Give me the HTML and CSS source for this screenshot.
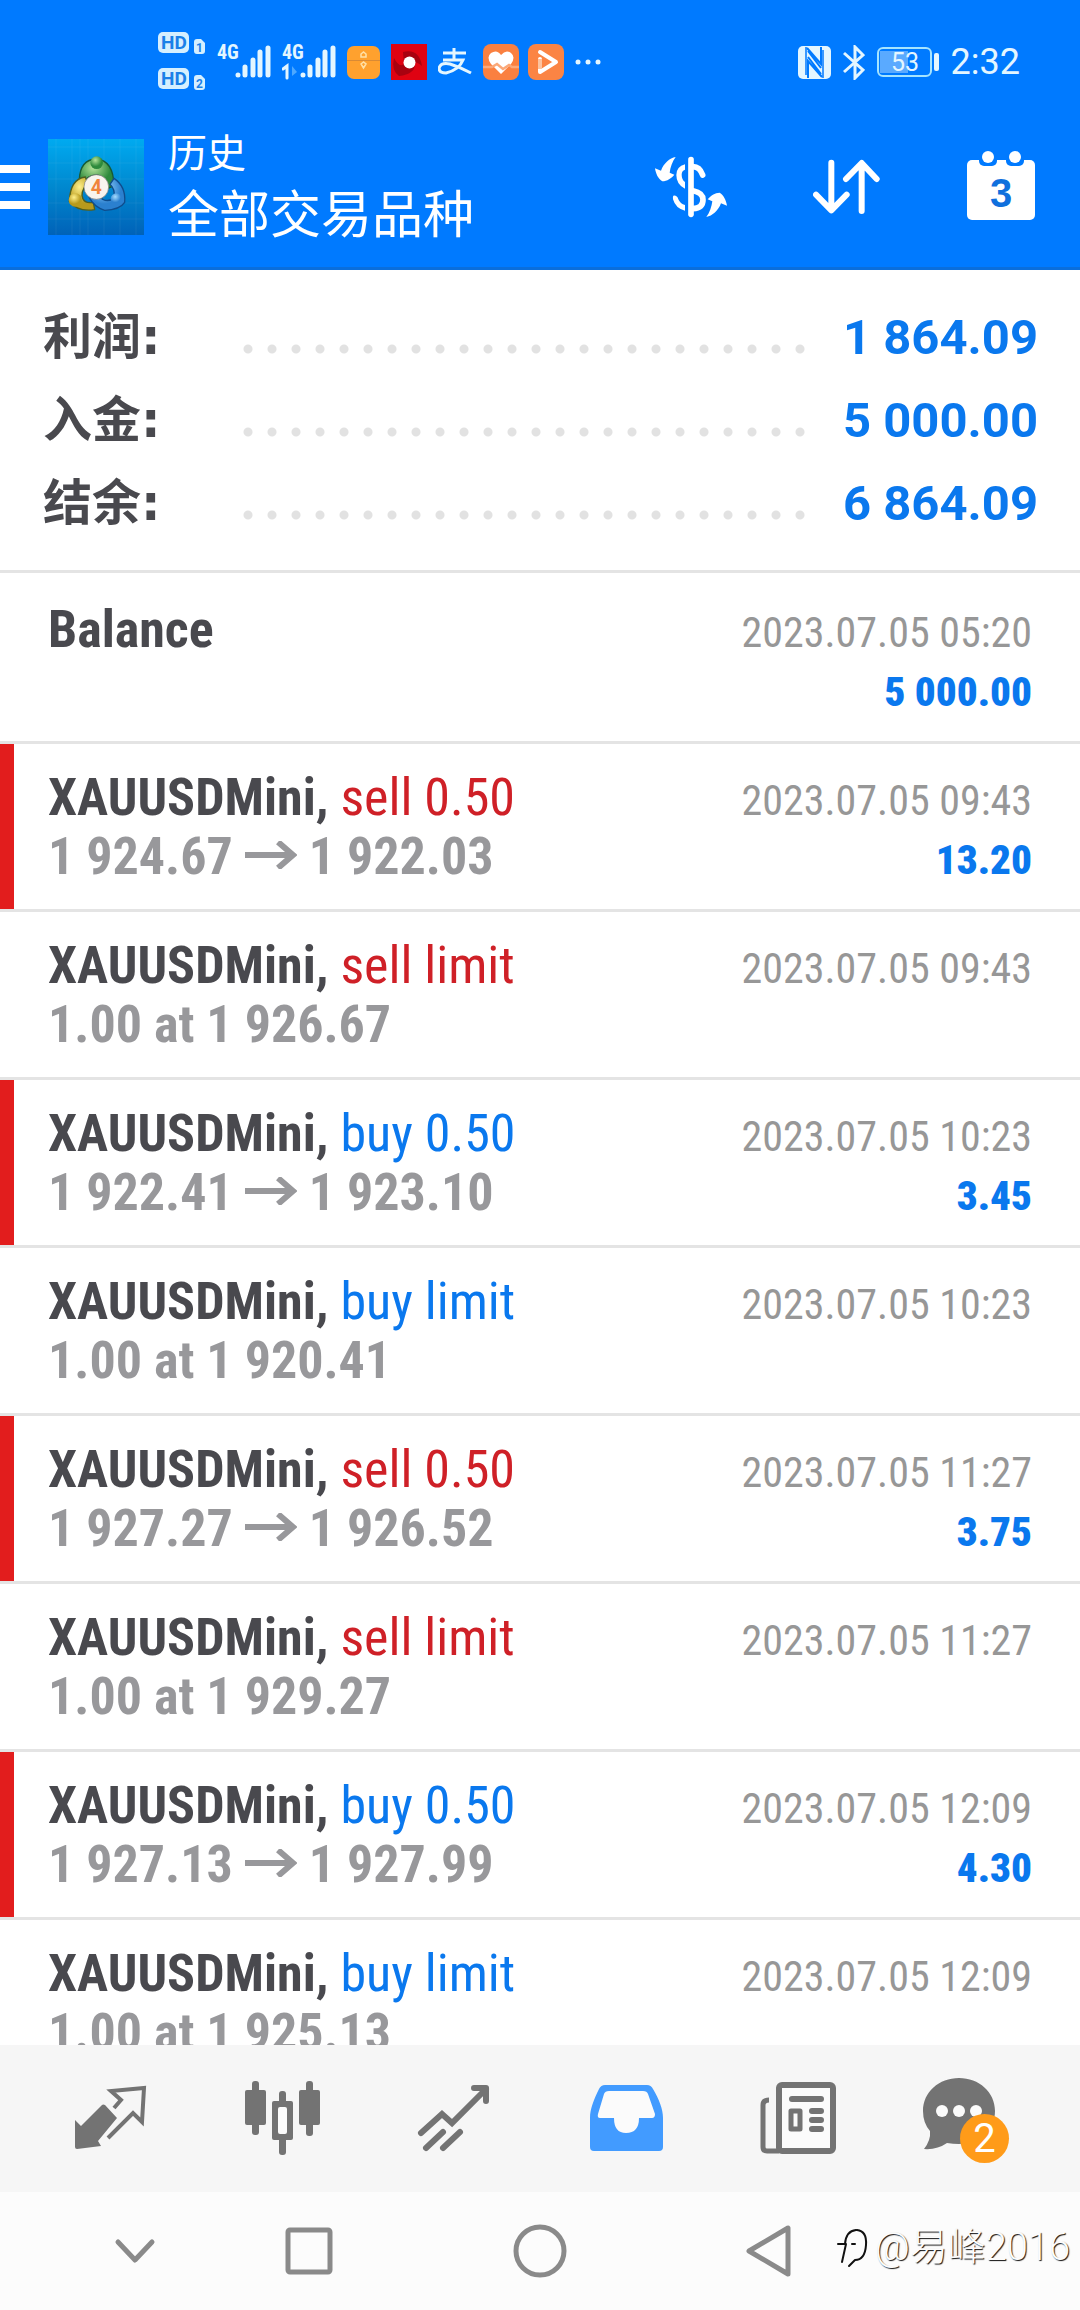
FILE: index.html
```html
<!DOCTYPE html>
<html lang="zh-CN">
<head>
<meta charset="utf-8">
<meta name="viewport" content="width=device-width, initial-scale=1">
<title>历史</title>
<link rel="stylesheet" href="styles.css">
</head>
<body>
<div class="screen">
  <div class="status">
    <div class="status-left">
      <svg class="hd" width="48" height="60" viewBox="0 0 48 60">
        <rect x="0" y="0" width="31" height="21" rx="5"/><rect x="0" y="36" width="31" height="21" rx="5"/>
        <path d="M36 10 q0-3 3-3 h4 l4 4 v8 q0 3-3 3 h-5 q-3 0-3-3z M36 46 q0-3 3-3 h4 l4 4 v8 q0 3-3 3 h-5 q-3 0-3-3z"/>
        <text x="3" y="17">HD</text><text x="3" y="53">HD</text>
        <text class="tiny" x="38" y="20">1</text><text class="tiny" x="38" y="56">2</text>
      </svg>
      <svg class="signal" width="54" height="44" viewBox="0 -4 54 44">
        <text x="0" y="15">4G</text>
        <path d="M21 31v0 M28 23v8 M36 16v15 M43 8v23 M51 4v27"/>
      </svg>
      <svg class="signal" width="54" height="44" viewBox="0 -4 54 44">
        <text x="0" y="15">4G</text>
        <path class="thin" d="M1 25l4-3v12"/><path class="dim" d="M10 22v10l5-4z"/>
        <path d="M21 31v0 M28 23v8 M36 16v15 M43 8v23 M51 4v27"/>
      </svg>
      <svg width="33" height="33" viewBox="0 0 33 33">
        <rect width="33" height="33" rx="7" fill="#ffa12e"/><path d="M0 14.500h33" stroke="#d98a35"/>
        <path d="M14 11h5v-3l-2.500-2-2.500 2zM14 18l2.500-2 2.500 2-2.500 4z" fill="none" stroke="#ffe1a8" stroke-width="1.500"/>
      </svg>
      <svg width="36" height="36" viewBox="0 0 36 36">
        <rect width="36" height="36" fill="#df0312"/><path d="M12 8 Q28 4 31 22 Q24 16 24 20 Q24 30 8 32 Q0 26 3 14 Q8 24 13 20Z" fill="#a80210"/>
        <circle cx="18.500" cy="18.500" r="6" fill="#fff"/>
      </svg>
      <svg width="34" height="28" viewBox="0 0 34 28" fill="none" stroke="#e4f6ff" stroke-width="3">
        <path d="M5 5H28M16 0V12M5 12H25Q21 22 8 25Q1 25 1 20Q3 14 12 16Q22 19 33 25"/>
      </svg>
      <div class="apps">
      <svg width="36" height="36" viewBox="0 0 36 36">
        <rect width="36" height="36" rx="8" fill="#fa8040"/>
        <path d="M18 30 L8 20 Q3 13 8 9 Q14 5 18 11 Q23 5 28 9 Q33 13 28 20Z" fill="#fff"/>
        <path d="M0 23H9L14 20L20 25L26 21L29 23H36" fill="none" stroke="#fba878" stroke-width="2.500"/>
      </svg>
      <svg width="36" height="36" viewBox="0 0 36 36">
        <rect width="36" height="36" rx="8" fill="#fb8444"/>
        <path d="M12 15V28L28 18L12 8" fill="none" stroke="#fff" stroke-width="4" stroke-linejoin="round" stroke-linecap="round"/>
        <path d="M12 15v10" stroke="#fcc3a0" stroke-width="4"/>
      </svg>
      </div>
      <svg class="more" width="26" height="6" viewBox="0 0 26 6" fill="#e4f6ff"><circle cx="3" cy="3" r="2.500"/><circle cx="13" cy="3" r="2.500"/><circle cx="23" cy="3" r="2.500"/></svg>
    </div>
    <div class="status-right">
      <svg width="33" height="33" viewBox="0 0 33 33">
        <rect width="33" height="33" rx="5" fill="#e4f6ff"/>
        <path d="M8 1V29M25 4V32" stroke="#007aff" stroke-width="1.500"/>
        <path d="M9 2L23 18V9V1M24 31L10 15V24V32M10 5L23 22M10 11L23 28" fill="none" stroke="#007aff" stroke-width="2"/>
      </svg>
      <svg width="22" height="35" viewBox="0 0 22 35"><path d="M1 8L20 25L12 33V2L20 10L1 27" fill="none" stroke="#e4f6ff" stroke-width="3"/></svg>
      <svg class="battery" width="62" height="30" viewBox="0 0 62 30">
        <rect x="3" y="4" width="28" height="22" fill="#5aaaff"/>
        <rect x="1" y="1" width="53" height="28" rx="5" fill="none" stroke="#a5e4ff" stroke-width="2"/>
        <rect x="57" y="6" width="5" height="18" rx="2" fill="#e4f6ff"/>
        <text x="14" y="24">53</text>
      </svg>
      <span class="clock">2:32</span>
    </div>
  </div>

  <header class="appbar">
    <button class="menu" aria-label="菜单"><i></i><i></i><i></i></button>
    <svg class="logo" width="96" height="96" viewBox="0 0 288 288">
      <defs>
        <linearGradient id="bg" x1="0" y1="0" x2="0" y2="1"><stop offset="0" stop-color="#00aaf0"/><stop offset=".5" stop-color="#0088cf"/><stop offset="1" stop-color="#0062b8"/></linearGradient>
        <radialGradient id="gr" cx=".4" cy=".3"><stop offset="0" stop-color="#b5e39a"/><stop offset="1" stop-color="#2e8a3c"/></radialGradient>
        <radialGradient id="ye" cx=".4" cy=".3"><stop offset="0" stop-color="#fff08a"/><stop offset="1" stop-color="#b89a1c"/></radialGradient>
        <radialGradient id="bl" cx=".4" cy=".3"><stop offset="0" stop-color="#a5dcff"/><stop offset="1" stop-color="#2b80cf"/></radialGradient>
      </defs>
      <rect width="288" height="288" fill="url(#bg)"/>
      <path d="M24 0V288M72 0V288M96 0V288M120 0V288M168 0V288M216 0V288M264 0V288M0 24H288M0 72H288M0 120H288M0 192H288M0 240H288" stroke="#fff" stroke-opacity=".09" stroke-width="2"/>
      <path d="M94 122Q96 62 145 60Q196 64 198 140L176 150Q170 110 146 108Q116 110 112 128Z" fill="url(#gr)" stroke="#175a35" stroke-width="4"/>
      <path d="M112 114Q66 120 64 188Q90 220 140 212L136 190Q106 196 102 170Q102 146 120 136Z" fill="url(#ye)" stroke="#4f5f20" stroke-width="4"/>
      <path d="M198 118Q234 142 230 190Q216 212 170 214Q138 204 124 176L150 170Q176 196 198 176Q202 150 186 136Z" fill="url(#bl)" stroke="#0f4c8c" stroke-width="4"/>
      <circle cx="146" cy="71" r="19" fill="url(#gr)"/><circle cx="82" cy="183" r="20" fill="url(#ye)"/><circle cx="205" cy="180" r="17" fill="url(#bl)"/>
      <circle cx="145" cy="144" r="37" fill="#f8f4ee" stroke="#777" stroke-width="2"/>
      <text x="145" y="166" text-anchor="middle">4</text>
    </svg>
    <div class="titles">
      <h1>历史</h1>
      <p>全部交易品种</p>
    </div>
    <div class="actions">
      <button aria-label="交易品种">
        <svg width="72" height="62" viewBox="0 0 216 186" fill="none" stroke="#fff" stroke-width="17" stroke-linecap="round">
          <path d="M108 11V175"/>
          <path d="M90 25v16Q80 44 80 56Q80 70 90 78v20Q64 86 64 57Q64 32 90 25Z" fill="#fff" stroke="none"/>
          <path d="M114 32Q134 32 143 57M114 104Q144 110 144 131Q144 156 114 158"/>
          <path d="M55 119Q66 117 70 130Q76 144 90 147v17Q62 158 54 130Q53 121 55 119Z" fill="#fff" stroke="none"/>
          <path id="swing" d="M62 3C44 6 26 22 18 44L0 37C2 52 10 70 22 76C36 76 50 66 58 56L44 50C46 34 52 16 62 3Z" fill="#fff" stroke="none"/>
          <use href="#swing" transform="rotate(180 108 93)"/>
        </svg>
      </button>
      <button aria-label="排序">
        <svg width="67" height="56" viewBox="0 0 201 168" fill="none" stroke="#fff" stroke-width="18" stroke-linecap="round" stroke-linejoin="round">
          <path d="M55 11V153M9 107L55 154L101 107M146 156V13M99 60L146 12L191 60"/>
        </svg>
      </button>
      <button aria-label="日期">
        <svg class="calendar" width="70" height="72" viewBox="0 0 70 72">
          <rect x="1" y="9" width="68" height="60" rx="5" fill="#fff"/>
          <rect x="13" y="3" width="18" height="12" rx="5" fill="#007aff"/><rect x="40" y="3" width="18" height="12" rx="5" fill="#007aff"/>
          <circle cx="22" cy="6" r="6" fill="#fff"/><circle cx="49" cy="6" r="6" fill="#fff"/>
          <text x="35" y="56" text-anchor="middle">3</text>
        </svg>
      </button>
    </div>
  </header>

  <dl class="summary">
    <div><dt>利润:</dt><dd class="dots"></dd><dd>1 864.09</dd></div>
    <div><dt>入金:</dt><dd class="dots"></dd><dd>5 000.00</dd></div>
    <div><dt>结余:</dt><dd class="dots"></dd><dd>6 864.09</dd></div>
  </dl>

  <ul class="deals">
    <li><div class="line"><b>Balance</b><time>2023.07.05 05:20</time></div><div class="line detail"><span>&nbsp;</span><strong>5 000.00</strong></div></li>
    <li class="closed"><div class="line"><span><b>XAUUSDMini,</b> <span class="sell">sell 0.50</span></span><time>2023.07.05 09:43</time></div><div class="line detail"><span>1 924.67 <svg class="arrow" viewBox="0 0 52 28"><path d="M0 14H48M33 1L48 14L33 27"/></svg> 1 922.03</span><strong>13.20</strong></div></li>
    <li><div class="line"><span><b>XAUUSDMini,</b> <span class="sell">sell limit</span></span><time>2023.07.05 09:43</time></div><div class="line detail"><span>1.00 at 1 926.67</span></div></li>
    <li class="closed"><div class="line"><span><b>XAUUSDMini,</b> <span class="buy">buy 0.50</span></span><time>2023.07.05 10:23</time></div><div class="line detail"><span>1 922.41 <svg class="arrow" viewBox="0 0 52 28"><path d="M0 14H48M33 1L48 14L33 27"/></svg> 1 923.10</span><strong>3.45</strong></div></li>
    <li><div class="line"><span><b>XAUUSDMini,</b> <span class="buy">buy limit</span></span><time>2023.07.05 10:23</time></div><div class="line detail"><span>1.00 at 1 920.41</span></div></li>
    <li class="closed"><div class="line"><span><b>XAUUSDMini,</b> <span class="sell">sell 0.50</span></span><time>2023.07.05 11:27</time></div><div class="line detail"><span>1 927.27 <svg class="arrow" viewBox="0 0 52 28"><path d="M0 14H48M33 1L48 14L33 27"/></svg> 1 926.52</span><strong>3.75</strong></div></li>
    <li><div class="line"><span><b>XAUUSDMini,</b> <span class="sell">sell limit</span></span><time>2023.07.05 11:27</time></div><div class="line detail"><span>1.00 at 1 929.27</span></div></li>
    <li class="closed"><div class="line"><span><b>XAUUSDMini,</b> <span class="buy">buy 0.50</span></span><time>2023.07.05 12:09</time></div><div class="line detail"><span>1 927.13 <svg class="arrow" viewBox="0 0 52 28"><path d="M0 14H48M33 1L48 14L33 27"/></svg> 1 927.99</span><strong>4.30</strong></div></li>
    <li><div class="line"><span><b>XAUUSDMini,</b> <span class="buy">buy limit</span></span><time>2023.07.05 12:09</time></div><div class="line detail"><span>1.00 at 1 925.13</span></div></li>
  </ul>

  <nav class="tabs">
    <button aria-label="报价"><svg width="76" height="68" viewBox="0 0 76 68"><path d="M3 36L9 42L30 21Q31 20 33 21L45 34L26 57L29 62L5 65Q3 65 3 63Z" fill="#737373"/><path d="M42 24L49 16L39 7L72 4L70 38L61 29L36 54" fill="none" stroke="#737373" stroke-width="4"/></svg></button>
    <button aria-label="图表"><svg width="78" height="78" viewBox="0 0 78 78"><g fill="#737373"><rect x="2" y="11" width="21" height="35" rx="2"/><rect x="9" y="2" width="7" height="54" rx="3"/><rect x="56" y="11" width="21" height="35" rx="2"/><rect x="63" y="2" width="7" height="55" rx="3"/><rect x="29" y="22" width="21" height="39" rx="2"/><rect x="36" y="12" width="7" height="64" rx="3"/></g><rect x="35" y="28" width="9" height="27" rx="2" fill="#fbfbfb"/></svg></button>
    <button aria-label="交易"><svg width="76" height="70" viewBox="0 0 76 70" fill="none" stroke="#737373" stroke-width="6" stroke-linecap="round"><path d="M5 50L26 31L36 40L70 6M10 65L27 49M27 65L44 49"/><path d="M58 5H70V18" stroke-linejoin="round"/></svg></button>
    <button class="active" aria-label="历史"><svg width="76" height="70" viewBox="0 0 76 70"><path d="M17 2H59Q63 2 65 6C71 16 75 26 75 35V64Q75 68 71 68H6Q2 68 2 64V35C2 26 6 16 11 6Q13 2 17 2Z" fill="#429bff"/><path d="M21 8H55Q59 8 60 11L67 31Q67 35 64 35H51Q51 50 38 50Q26 50 26 35H12Q9 35 10 31L16 11Q17 8 21 8Z" fill="#fbfbfb"/></svg></button>
    <button aria-label="新闻"><svg width="76" height="76" viewBox="0 0 76 76" fill="none" stroke="#737373" stroke-width="6" stroke-linecap="round"><rect x="19" y="5" width="54" height="66" rx="3" fill="#fbfbfb"/><path d="M9 20Q3 20 3 25V67Q3 71 7 71H19" stroke-width="5" stroke-linecap="butt"/><path d="M32 19H61M52 31H61M52 40H61M52 49H61"/><rect x="31" y="31" width="9" height="18" stroke-width="5" stroke-linejoin="round"/></svg></button>
    <button class="mail" aria-label="消息"><svg width="98" height="84" viewBox="0 0 98 84"><path d="M38 2C18 2 2 16 2 35Q2 47 9 55Q10 64 3 73Q16 74 26 67Q32 68 38 68C58 68 74 54 74 35C74 16 58 2 38 2Z" fill="#737373"/><g fill="#fbfbfb"><circle cx="21" cy="35" r="6"/><circle cx="38" cy="35" r="6"/><circle cx="55" cy="35" r="6"/></g></svg><span class="badge">2</span></button>
  </nav>

  <nav class="system">
    <button aria-label="收起"><svg width="42" height="26" viewBox="0 0 42 26"><path d="M4 4L21 22L38 4"/></svg></button>
    <button aria-label="最近"><svg width="48" height="48" viewBox="0 0 48 48"><rect x="3" y="3" width="42" height="42" rx="2"/></svg></button>
    <button aria-label="主页"><svg width="54" height="54" viewBox="0 0 54 54"><circle cx="27" cy="27" r="24"/></svg></button>
    <button aria-label="返回"><svg width="46" height="54" viewBox="0 0 46 54"><path d="M3 27L42 4V50Z"/></svg></button>
    <div class="mark">
      <svg width="32" height="42" viewBox="0 0 32 42"><path d="M5 36L9 18M1 18H8Q9 5 19 4M20 4Q30 5 29 19Q28 34 18 34L12 40M15 18h3"/></svg>
      <span>@易峰2016</span>
    </div>
  </nav>
</div>
</body>
</html>
```
FILE: styles.css
```css
* { box-sizing: border-box; margin: 0; padding: 0; }
body { background: #fff; color: #49494e; font-family: Roboto, "Noto Sans CJK SC", sans-serif; }
button { background: none; border: 0; color: inherit; font: inherit; display: flex; align-items: center; justify-content: center; }
svg { display: block; flex: none; }

.screen { display: flex; flex-direction: column; height: 100vh; overflow: hidden; }

.status { display: flex; justify-content: space-between; background: #007aff; height: 124px; padding: 0 60px 0 158px; }
.status-left, .status-right { display: flex; align-items: center; height: 124px; }
.status-left { gap: 11px; }
.apps { display: flex; gap: 9px; }
.status-right { gap: 12px; color: #e4f6ff; }
.hd { fill: #d5efff; }
.hd text { fill: #1a80e8; font: bold 19px Roboto, sans-serif; }
.hd .tiny { font-size: 12px; }
.signal text { fill: #e4f6ff; font: bold 20px "Roboto Condensed", Roboto, sans-serif; }
.signal path { fill: none; stroke: #e4f6ff; stroke-width: 5; stroke-linecap: round; }
.signal .thin { stroke-width: 3; }
.signal .dim { fill: #4da8ff; stroke: none; }
.battery text { fill: #e4f6ff; font: 25px Roboto, sans-serif; }
.clock { font-size: 36px; }

.appbar { display: flex; align-items: center; background: #007aff; border-bottom: 3px solid #0a6edb; height: 146px; padding: 0 44px 18px 0; }
.menu { flex-direction: column; gap: 10px; width: 30px; margin-right: 18px; }
.menu i { width: 100%; height: 8px; background: #fff; }
.logo text { fill: #f0843c; font: bold 58px Roboto, sans-serif; }
.titles { flex: 1; display: flex; flex-direction: column; gap: 2px; padding-left: 24px; color: #fff; }
.titles h1 { font-size: 39px; font-weight: 400; line-height: 56px; }
.titles p { font-size: 51px; line-height: 64px; }
.actions { display: flex; align-items: center; gap: 86px; }
.calendar text { fill: #1070dd; font: bold 40px "Liberation Sans", sans-serif; }

.summary { border-bottom: 3px solid #e4e4e4; padding: 26px 42px 25px 43px; font-size: 49px; font-weight: 700; }
.summary div { display: grid; grid-template-columns: 193px 1fr 226px; align-items: center; height: 83px; }
.summary dt { font-family: "DejaVu Sans", "Noto Sans CJK SC", sans-serif; line-height: 56px; }
.summary dd { color: #0a78ee; text-align: right; }
.summary .dots { height: 24px; margin-top: 22px; background: radial-gradient(circle, #e2e2e2 4px, transparent 5px) 0 0 / 24px 24px; }

.deals { flex: 1 1 0; min-height: 0; overflow: hidden; list-style: none; font-family: "Roboto Condensed", "Liberation Sans Narrow", Roboto, sans-serif; }
.deals li { position: relative; height: 168px; padding: 24px 48px 0; border-top: 3px solid #e4e4e4; }
.deals li:first-child { border-top-color: transparent; }
.closed::before { content: ""; position: absolute; inset: 0 auto 0 0; width: 14px; background: #e21d1d; }
.line { display: flex; align-items: baseline; justify-content: space-between; height: 59px; font-size: 52px; line-height: 59px; }
.line time { color: #979797; font-size: 42px; }
.line strong { color: #0a78ee; font-size: 41px; }
.detail { color: #98989b; font-weight: 700; }
.sell { color: #cf2027; }
.buy { color: #0a78ee; }
.arrow { display: inline-block; width: 52px; height: 28px; vertical-align: 5px; fill: none; stroke: #98989b; stroke-width: 6; }

.tabs { display: grid; grid-template-columns: repeat(6, 1fr); background: #f6f6f6; height: 147px; padding: 0 24px 2px; }
.mail { position: relative; }
.badge { position: absolute; top: 69px; left: 50%; margin-left: -10px; width: 49px; height: 49px; border-radius: 50%; background: #ff9b19; color: #fff; font-size: 40px; line-height: 49px; text-align: center; }

.system { position: relative; display: grid; grid-template-columns: 174fr 174fr 288fr 170fr 226fr; background: #fcfcfc; height: 118px; padding-left: 48px; }
.system svg { fill: none; stroke: #8a8a8a; stroke-width: 5; stroke-linejoin: round; stroke-linecap: round; }
.mark { position: absolute; right: 10px; top: 30px; display: flex; align-items: center; gap: 6px; color: #fcfcfc; font-size: 38px; line-height: 50px; font-weight: 300; text-shadow: 1px 1px 1px #111; }
.mark svg { stroke: #111; stroke-width: 2; }
```
